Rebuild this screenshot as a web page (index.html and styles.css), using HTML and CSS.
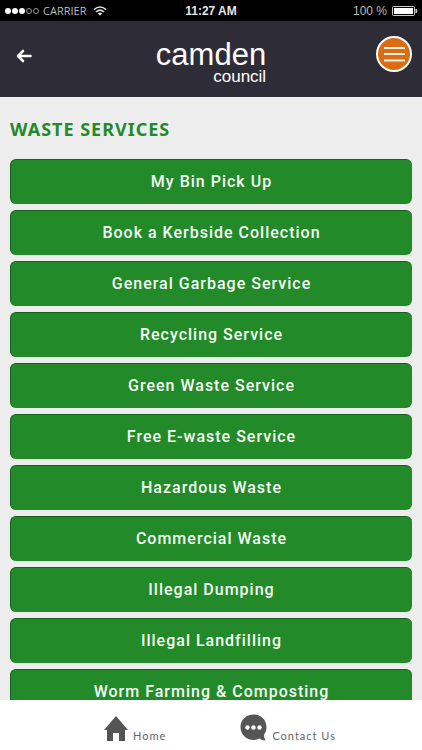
FILE: index.html
```html
<!DOCTYPE html>
<html lang="en">
<head>
    <meta charset="UTF-8">
    <meta name="viewport" content="width=device-width, initial-scale=1.0">
    <title>Waste Services</title>
    <link rel="stylesheet" href="styles.css">
</head>
<body>
    <div class="status-bar">
        <div class="carrier">
            <svg class="signal" viewBox="0 0 36 8" width="36" height="8">
                <g fill="#fff">
                    <circle cx="4" cy="4" r="3"/>
                    <circle cx="11" cy="4" r="3"/>
                    <circle cx="18" cy="4" r="3"/>
                </g>
                <g fill="none" stroke="#999" stroke-width="1">
                    <circle cx="25" cy="4" r="2.5"/>
                    <circle cx="32" cy="4" r="2.5"/>
                </g>
            </svg>
            <span>CARRIER</span>
            <svg viewBox="0 0 14 10" width="14" height="10">
                <g fill="none" stroke="#ddd" stroke-width="1.6">
                    <path d="M1 3.7 Q7 -1.7 13 3.7"/>
                    <path d="M3 6 Q7 2.4 11 6"/>
                </g>
                <path d="M4.7 7.3 Q7 5.5 9.3 7.3 L7 9.8 Z" fill="#ddd"/>
            </svg>
        </div>
        <div class="time">11:27 AM</div>
        <div class="battery">
            <span>100 %</span>
            <svg viewBox="0 0 26 10" width="26" height="10">
                <rect x="0.5" y="0.5" width="22" height="9" rx="1" fill="none" stroke="#ccc"/>
                <rect x="2" y="2" width="19" height="6" fill="#fff"/>
                <path d="M24 3 Q26 5 24 7 Z" fill="#ccc" stroke="#ccc"/>
            </svg>
        </div>
    </div>

    <header class="header">
        <button type="button" class="back-btn" aria-label="Back">
            <svg viewBox="0 0 16 14" width="16" height="14">
                <path d="M7 2 L2 7 L7 12 M2.5 7 H14.5" fill="none" stroke="#fff" stroke-width="2.6" stroke-linecap="round" stroke-linejoin="round"/>
            </svg>
        </button>
        <div class="logo">
            <span class="logo-name">camden</span>
            <span class="logo-sub">council</span>
        </div>
        <button type="button" class="menu-btn" aria-label="Menu">
            <svg viewBox="0 0 36 36" width="36" height="36">
                <circle cx="18" cy="18" r="17" fill="#d96d15" stroke="#fff" stroke-width="2"/>
                <path d="M8 12 H29 M8 18 H29 M8 24.500 H29" stroke="#fff0dc" stroke-width="2"/>
            </svg>
        </button>
    </header>

    <main class="content">
        <h1>WASTE SERVICES</h1>
        <div class="services">
            <button type="button" class="service-btn">My Bin Pick Up</button>
            <button type="button" class="service-btn">Book a Kerbside Collection</button>
            <button type="button" class="service-btn">General Garbage Service</button>
            <button type="button" class="service-btn">Recycling Service</button>
            <button type="button" class="service-btn">Green Waste Service</button>
            <button type="button" class="service-btn">Free E-waste Service</button>
            <button type="button" class="service-btn">Hazardous Waste</button>
            <button type="button" class="service-btn">Commercial Waste</button>
            <button type="button" class="service-btn">Illegal Dumping</button>
            <button type="button" class="service-btn">Illegal Landfilling</button>
            <button type="button" class="service-btn">Worm Farming &amp; Composting</button>
        </div>
    </main>

    <nav class="footer">
        <a href="#home">
            <svg viewBox="0 0 24 25" width="24" height="25">
                <path d="M12 0 L24 14 H21 V25 H15 V17 H9 V25 H3 V14 H0 Z" fill="#555"/>
            </svg>
            <span>Home</span>
        </a>
        <a href="#contact">
            <svg viewBox="0 0 27 27" width="27" height="27">
                <path d="M13.500 0.500 C21 0.500 26.500 6 26.500 13 C26.500 16 25.500 18.500 24 20.500 C23.800 22.500 24.300 24.500 25.500 26.500 C23 26.500 20.700 25.600 19.500 24.500 C17.700 25.500 15.600 26 13.500 26 C6 26 0.500 20 0.500 13 C0.500 6 6 0.500 13.500 0.500 Z" fill="#555"/>
                <g fill="#fff">
                    <circle cx="7.500" cy="13.500" r="2.200"/>
                    <circle cx="13.500" cy="13.500" r="2.200"/>
                    <circle cx="19.500" cy="13.500" r="2.200"/>
                </g>
            </svg>
            <span>Contact Us</span>
        </a>
    </nav>
</body>
</html>
```
FILE: styles.css
```css
* {
    box-sizing: border-box;
}

body {
    display: flex;
    flex-direction: column;
    height: 100vh;
    margin: 0;
    background-color: #ededed;
    font-family: "Noto Sans", sans-serif;
}

button {
    padding: 0;
    border: none;
    background: none;
    cursor: pointer;
}

svg {
    display: block;
    flex: none;
}

/* phone status bar */
.status-bar {
    display: grid;
    grid-template-columns: 1fr auto 1fr;
    align-items: center;
    height: 21px;
    padding: 0 4px;
    background-color: #000;
    color: #bbb;
    font-family: "Liberation Sans", Arial, sans-serif;
    font-size: 12px;
}

.carrier,
.battery {
    display: flex;
    align-items: center;
    gap: 5px;
}

.carrier {
    font-family: "Open Sans", sans-serif;
    font-size: 11px;
    gap: 3px;
}

.carrier span {
    margin-right: 4px;
}

.battery {
    justify-content: flex-end;
}

.time {
    color: #e6e6e6;
    font-weight: bold;
}

/* header */
.header {
    display: grid;
    grid-template-columns: 1fr auto 1fr;
    align-items: center;
    height: 76px;
    flex: none;
    padding: 0 10px;
    background-color: #2e2d37;
}

.back-btn {
    justify-self: start;
    padding: 0 6px 6px;
}

.menu-btn {
    justify-self: end;
    margin-bottom: 10px;
}

.logo {
    display: flex;
    flex-direction: column;
    align-items: flex-end;
    padding-top: 8px;
    color: #fff;
    font-family: "Liberation Sans", Arial, sans-serif;
}

.logo-name {
    font-size: 31px;
    line-height: 28px;
}

.logo-sub {
    font-size: 17px;
    line-height: 16px;
}

/* service list */
.content {
    flex: 1;
    min-height: 0;
    overflow: hidden;
    padding: 20px 10px 0;
}

h1 {
    margin: 0 0 18px;
    color: #238a2a;
    font-size: 18px;
    line-height: 24px;
    letter-spacing: 1px;
}

.services {
    display: flex;
    flex-direction: column;
    gap: 6px;
}

.service-btn {
    height: 45px;
    flex: none;
    padding-bottom: 2px;
    border-top: 1px solid #17611c;
    border-left: 1px solid #17611c;
    border-radius: 6px;
    background-color: #238a2a;
    color: #f4fff4;
    font-family: Roboto, sans-serif;
    font-size: 16px;
    font-weight: 500;
    letter-spacing: 1px;
}

/* bottom navigation */
.footer {
    display: flex;
    justify-content: center;
    gap: 74px;
    height: 50px;
    flex: none;
    padding: 13px 0 0 18px;
    background-color: #fff;
}

.footer a {
    display: flex;
    align-items: flex-end;
    gap: 5px;
    height: 28px;
    color: #666;
    font-family: Lato, sans-serif;
    font-size: 11px;
    line-height: 10px;
    letter-spacing: 1px;
    text-decoration: none;
}
```
